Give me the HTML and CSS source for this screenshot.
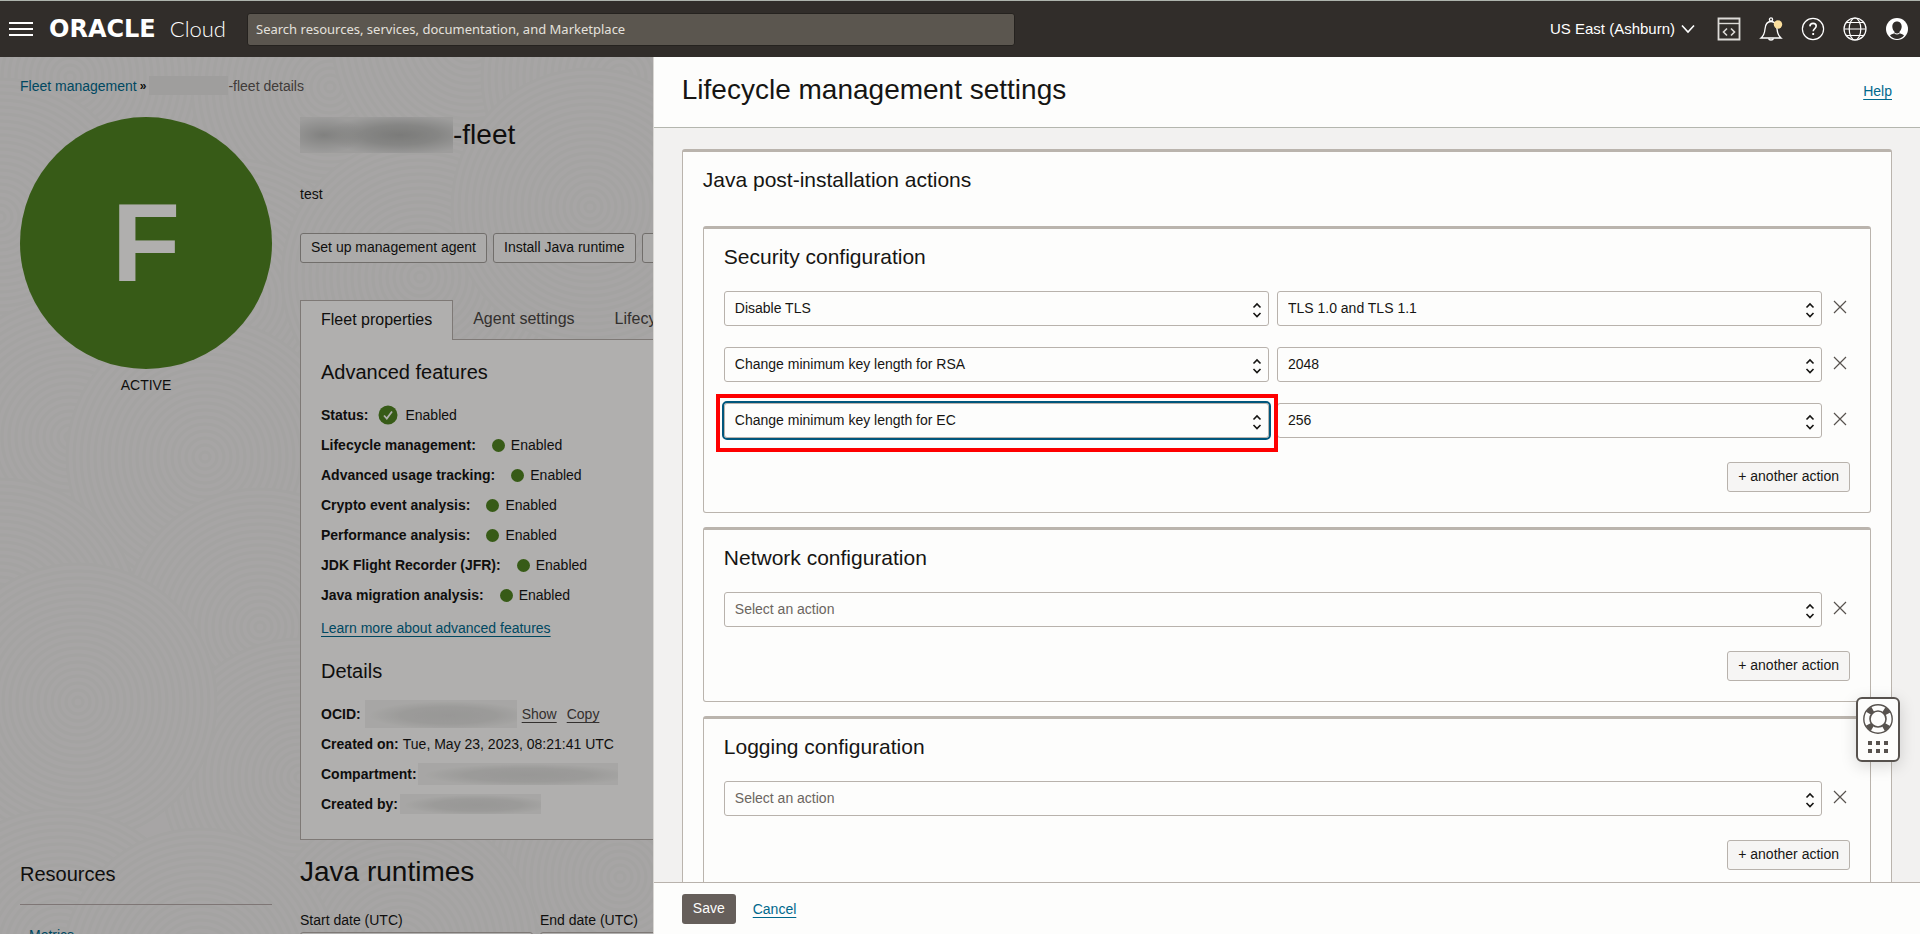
FILE: index.html
```html
<!DOCTYPE html>
<html lang="en">
<head>
<meta charset="utf-8">
<title>Fleet details - Lifecycle management settings</title>
<link rel="stylesheet" href="styles.css">
</head>
<body>
<svg class="defs" aria-hidden="true">
  <defs>
    <symbol id="i-updown" viewBox="0 0 10 16"><path d="M1.5 5.5 5 2l3.500 3.500M1.500 11 5 14.500 8.500 11" fill="none" stroke="currentColor" stroke-width="1.600"/></symbol>
    <symbol id="i-x" viewBox="0 0 14 14"><path d="M1 1 13 13M13 1 1 13" fill="none" stroke="currentColor" stroke-width="1.200"/></symbol>
  </defs>
</svg>

<header class="topbar">
  <button class="icon-btn" aria-label="Navigation menu">
    <svg width="24" height="16" viewBox="0 0 24 16"><path d="M0 2h24M0 8h24M0 14h24" stroke="#fff" stroke-width="2"/></svg>
  </button>
  <a class="logo" href="#"><span class="logo-name">ORACLE</span><span class="logo-cloud">Cloud</span></a>
  <input class="search" type="text" aria-label="Search" placeholder="Search resources, services, documentation, and Marketplace">
  <div class="tools">
    <button class="region">US East (Ashburn)
      <svg width="14" height="10" viewBox="0 0 14 10"><path d="M1 1.500 7 8l6-6.500" fill="none" stroke="#fff" stroke-width="1.600"/></svg>
    </button>
    <button class="icon-btn" aria-label="Developer tools">
      <svg width="24" height="24" viewBox="0 0 24 24" fill="none" stroke="#dddbd8"><path d="M1.500 1.500h21v21h-21z" stroke-width="1.800"/><path d="M1.500 6.500h21" stroke-width="1.400"/><path d="M10 11.500 6.500 15l3.500 3.500M14 11.500l3.500 3.500-3.500 3.500" stroke-width="1.600"/></svg>
    </button>
    <button class="icon-btn" aria-label="Announcements">
      <svg width="24" height="24" viewBox="0 0 24 24" fill="none" stroke="#fff" stroke-width="1.300"><path d="M2 21c2.500-2 3.500-4 4-9 .4-5 2-7.500 6-7.500s5.600 2.500 6 7.500c.5 5 1.500 7 4 9z"/><circle cx="12" cy="2.500" r="1.600"/><path d="M9.500 21.500c.6 2 4.400 2 5 0"/><circle cx="19" cy="7.500" r="4.200" fill="#fbdf9d" stroke="none"/></svg>
    </button>
    <button class="icon-btn" aria-label="Help menu">
      <svg width="24" height="24" viewBox="0 0 24 24" fill="none" stroke="#fff"><circle cx="12" cy="12" r="10.600" stroke-width="1.200"/><path d="M8.900 9.400c.1-2 1.400-3 3.200-3s3.100 1 3.100 2.700c0 2.400-3 2.600-3 5.200" stroke-width="1.600"/><path d="M12.200 16v2" stroke-width="1.800"/></svg>
    </button>
    <button class="icon-btn" aria-label="Language">
      <svg width="24" height="24" viewBox="0 0 24 24" fill="none" stroke="#fff" stroke-width="1.200"><circle cx="12" cy="12" r="11"/><ellipse cx="12" cy="12" rx="5.800" ry="11"/><path d="M1 12h22M3.500 5.500h17M3.500 18.500h17"/></svg>
    </button>
    <button class="icon-btn" aria-label="Profile">
      <svg width="24" height="24" viewBox="0 0 24 24"><circle cx="12" cy="12" r="11" fill="#fff"/><path d="M12 4.500c-3 0-4.700 2.200-4.700 5 0 2.200 1 4.200 2.200 5.200v1.600c-2 .5-3.700 1.200-4.500 2.200C6.800 20.700 9.300 22 12 22s5.200-1.300 7-3.500c-.8-1-2.500-1.700-4.500-2.200v-1.600c1.200-1 2.200-3 2.200-5.200 0-2.800-1.700-5-4.700-5z" fill="#312d2a"/><path d="M9.500 15.500c1.500 1.200 3.500 1.200 5 0v1.200c-1.500 1-3.500 1-5 0z" fill="#fff"/></svg>
    </button>
  </div>
</header>

<div class="workspace">
  <main class="page">
    <svg class="texture" aria-hidden="true">
      <defs>
        <pattern id="ring" width="1" height="1" viewBox="0 0 280 280">
          <g fill="#efedec" stroke="#ebeae8" stroke-width="3">
            <circle cx="140" cy="140" r="138"/><circle cx="140" cy="140" r="131"/><circle cx="140" cy="140" r="124"/><circle cx="140" cy="140" r="117"/><circle cx="140" cy="140" r="110"/><circle cx="140" cy="140" r="103"/><circle cx="140" cy="140" r="96"/><circle cx="140" cy="140" r="89"/><circle cx="140" cy="140" r="82"/><circle cx="140" cy="140" r="75"/><circle cx="140" cy="140" r="68"/><circle cx="140" cy="140" r="61"/><circle cx="140" cy="140" r="54"/><circle cx="140" cy="140" r="47"/><circle cx="140" cy="140" r="40"/><circle cx="140" cy="140" r="33"/><circle cx="140" cy="140" r="26"/><circle cx="140" cy="140" r="19"/><circle cx="140" cy="140" r="12"/><circle cx="140" cy="140" r="5"/>
          </g>
        </pattern>
      </defs>
      <g fill="url(#ring)">
        <circle cx="70" cy="20" r="140"/><circle cx="330" cy="30" r="140"/><circle cx="470" cy="-20" r="140"/><circle cx="620" cy="20" r="140"/>
        <circle cx="0" cy="160" r="140"/><circle cx="230" cy="240" r="140"/><circle cx="420" cy="220" r="140"/><circle cx="590" cy="150" r="140"/>
        <circle cx="70" cy="380" r="140"/><circle cx="205" cy="400" r="140"/><circle cx="0" cy="560" r="140"/><circle cx="260" cy="570" r="140"/>
        <circle cx="300" cy="720" r="140"/><circle cx="78" cy="645" r="140"/><circle cx="520" cy="900" r="140"/><circle cx="620" cy="820" r="140"/><circle cx="400" cy="890" r="140"/><circle cx="60" cy="890" r="140"/><circle cx="200" cy="910" r="140"/>
      </g>
    </svg>

    <nav class="breadcrumb" aria-label="Breadcrumb">
      <a href="#">Fleet management</a><b class="sep">»</b><span class="redact redact-crumb"></span><span class="crumb-now">-fleet details</span>
    </nav>

    <div class="page-grid">
      <aside class="identity">
        <div class="avatar">F</div>
        <div class="state">ACTIVE</div>
      </aside>

      <section class="detail">
        <h1 class="fleet-title"><span class="redact redact-title"></span>-fleet</h1>
        <p class="fleet-desc">test</p>
        <div class="actions">
          <button class="btn">Set up management agent</button>
          <button class="btn">Install Java runtime</button>
          <button class="btn" aria-label="More actions"><span class="more"></span></button>
        </div>
        <div class="tabs" role="tablist">
          <button class="tab tab-active" role="tab">Fleet properties</button>
          <button class="tab" role="tab">Agent settings</button>
          <button class="tab" role="tab">Lifecycle management settings</button>
        </div>
        <div class="panel">
          <h2 class="heading">Advanced features</h2>
          <ul class="facts">
            <li><b>Status:</b><svg class="check" width="20" height="20" viewBox="0 0 20 20"><circle cx="10" cy="10" r="9.500" fill="#508321"/><path d="m6 10.500 2.800 3L14 6.500" fill="none" stroke="#fcfbfa" stroke-width="1.800"/></svg>Enabled</li>
            <li><b>Lifecycle management:</b><i class="dot"></i>Enabled</li>
            <li><b>Advanced usage tracking:</b><i class="dot"></i>Enabled</li>
            <li><b>Crypto event analysis:</b><i class="dot"></i>Enabled</li>
            <li><b>Performance analysis:</b><i class="dot"></i>Enabled</li>
            <li><b>JDK Flight Recorder (JFR):</b><i class="dot"></i>Enabled</li>
            <li><b>Java migration analysis:</b><i class="dot"></i>Enabled</li>
          </ul>
          <a class="learn" href="#">Learn more about advanced features</a>
          <h2 class="heading">Details</h2>
          <ul class="facts">
            <li><b>OCID:</b><span class="redact redact-ocid"></span><a class="quiet" href="#">Show</a><a class="quiet" href="#">Copy</a></li>
            <li><b>Created on:</b><span class="value">Tue, May 23, 2023, 08:21:41 UTC</span></li>
            <li><b>Compartment:</b><span class="redact redact-comp"></span></li>
            <li><b>Created by:</b><span class="redact redact-by"></span></li>
          </ul>
        </div>
      </section>

      <nav class="resources" aria-label="Resources">
        <h2 class="heading">Resources</h2>
        <ul class="res-list"><li><a href="#">Metrics</a></li></ul>
      </nav>

      <section class="runtimes">
        <h1 class="runtimes-title">Java runtimes</h1>
        <div class="dates">
          <label class="date">Start date (UTC)<input type="text"></label>
          <label class="date">End date (UTC)<input type="text"></label>
        </div>
      </section>
    </div>
    <div class="dimmer"></div>
  </main>

  <section class="drawer" aria-labelledby="drawer-title">
    <div class="drawer-head">
      <h1 class="drawer-title" id="drawer-title">Lifecycle management settings</h1>
      <a class="link" href="#">Help</a>
    </div>

    <div class="drawer-body">
      <div class="card">
        <h2 class="heading">Java post-installation actions</h2>
        <div class="groups">
          <div class="card group">
            <h3 class="heading">Security configuration</h3>
            <div class="rows">
              <div class="row">
                <div class="pick"><select aria-label="Security action 1"><option>Disable TLS</option></select><svg><use href="#i-updown"/></svg></div>
                <div class="pick"><select aria-label="Value 1"><option>TLS 1.0 and TLS 1.1</option></select><svg><use href="#i-updown"/></svg></div>
                <button class="remove" aria-label="Remove"><svg><use href="#i-x"/></svg></button>
              </div>
              <div class="row">
                <div class="pick"><select aria-label="Security action 2"><option>Change minimum key length for RSA</option></select><svg><use href="#i-updown"/></svg></div>
                <div class="pick"><select aria-label="Value 2"><option>2048</option></select><svg><use href="#i-updown"/></svg></div>
                <button class="remove" aria-label="Remove"><svg><use href="#i-x"/></svg></button>
              </div>
              <div class="row">
                <div class="pick pick-current"><select aria-label="Security action 3"><option>Change minimum key length for EC</option></select><svg><use href="#i-updown"/></svg></div>
                <div class="pick"><select aria-label="Value 3"><option>256</option></select><svg><use href="#i-updown"/></svg></div>
                <button class="remove" aria-label="Remove"><svg><use href="#i-x"/></svg></button>
              </div>
            </div>
            <button class="btn add">+ another action</button>
          </div>

          <div class="card group">
            <h3 class="heading">Network configuration</h3>
            <div class="rows">
              <div class="row">
                <div class="pick pick-empty"><select aria-label="Network action"><option>Select an action</option></select><svg><use href="#i-updown"/></svg></div>
                <button class="remove" aria-label="Remove"><svg><use href="#i-x"/></svg></button>
              </div>
            </div>
            <button class="btn add">+ another action</button>
          </div>

          <div class="card group">
            <h3 class="heading">Logging configuration</h3>
            <div class="rows">
              <div class="row">
                <div class="pick pick-empty"><select aria-label="Logging action"><option>Select an action</option></select><svg><use href="#i-updown"/></svg></div>
                <button class="remove" aria-label="Remove"><svg><use href="#i-x"/></svg></button>
              </div>
            </div>
            <button class="btn add">+ another action</button>
          </div>
        </div>
      </div>
    </div>

    <div class="drawer-foot">
      <button class="save">Save</button>
      <a class="link" href="#">Cancel</a>
    </div>
  </section>
</div>

<button class="support" aria-label="Support">
  <svg width="30" height="30" viewBox="0 0 30 30" fill="none" stroke="#57524e"><circle cx="15" cy="15" r="11" stroke-width="6" stroke-dasharray="5.600 11.680" stroke-dashoffset="-5.840"/><circle cx="15" cy="15" r="14.200" stroke-width="1.400"/><circle cx="15" cy="15" r="8" stroke-width="1.600"/></svg>
  <svg width="20" height="12" viewBox="0 0 20 12" fill="#57524e"><path d="M0 0h4v4H0zM8 0h4v4H8zM16 0h4v4h-4zM0 8h4v4H0zM8 8h4v4H8zM16 8h4v4h-4z"/></svg>
</button>
</body>
</html>
```
FILE: styles.css
```css
* { box-sizing: border-box; }

body {
  margin: 0;
  height: 100vh;
  display: flex;
  flex-direction: column;
  overflow: hidden;
  font: 14px/20px "Liberation Sans", Arial, sans-serif;
  color: #161513;
}

h1, h2, h3, p, ul { margin: 0; padding: 0; font-weight: 400; }
ul { list-style: none; }
button, input, select { font: inherit; color: inherit; }
svg { display: block; flex: none; }
a { color: #00688c; text-decoration: none; }

.defs { position: absolute; width: 0; height: 0; }

/* Top bar */
.topbar {
  display: flex;
  align-items: center;
  flex: none;
  height: 57px;
  padding: 0 11px 0 9px;
  border-top: 1px solid #aeb4ad;
  background: #312d2a;
  color: #fff;
}
.icon-btn { padding: 0; border: 0; background: none; }
.logo {
  display: flex;
  flex: none;
  align-items: center;
  gap: 14px;
  width: 196px;
  margin-left: 16px;
  color: #fff;
}
.logo-name { font: bold 24px/28px "DejaVu Sans", sans-serif; }
.logo-cloud { font: 300 22px/28px Lato, sans-serif; }
.search {
  width: 40vw;
  flex: none;
  height: 33px;
  margin-left: 2px;
  padding: 0 8px;
  border: 1px solid #25221f;
  border-radius: 3px;
  background: #5b564f;
  font: 13px/20px "Noto Sans", sans-serif;
}
.search::placeholder { color: #e4e1dd; opacity: 1; }
.tools { display: flex; align-items: center; gap: 18px; margin-left: auto; }
.region {
  display: flex;
  align-items: center;
  gap: 6px;
  padding: 0 4px 0 0;
  border: 0;
  background: none;
  font-size: 15px;
}

/* Page behind the drawer */
.workspace { display: flex; flex: 1; min-height: 0; }
.page {
  position: relative;
  width: 34%;
  padding: 19px 0 0 20px;
  overflow: hidden;
  background: #efedec;
}
.texture { position: absolute; top: 0; left: 0; width: 100%; height: 100%; }
.dimmer { position: absolute; top: 0; left: 0; width: 100%; height: 100%; background: rgba(0, 0, 0, .3); }
.breadcrumb { position: relative; display: flex; white-space: nowrap; }
.sep { margin: 0 3px; font-size: 12px; }
.crumb-now { color: #5d5653; }
.page-grid {
  position: relative;
  z-index: 0;
  display: grid;
  grid-template-columns: 252px minmax(0, 1fr);
  column-gap: 28px;
  row-gap: 14px;
  margin-top: 21px;
  white-space: nowrap;
}
.avatar {
  display: flex;
  align-items: center;
  justify-content: center;
  aspect-ratio: 1;
  border-radius: 50%;
  background: #508321;
  color: #fcfbfa;
  font: bold 112px/120px "Liberation Sans", Arial, sans-serif;
}
.state { margin-top: 6px; text-align: center; }
.fleet-title { display: flex; font-size: 28px; line-height: 36px; }
.fleet-desc { margin-top: 31px; }
.actions { display: flex; gap: 6px; margin-top: 29px; }
.btn {
  flex: none;
  height: 30px;
  padding: 0 10px 2px;
  border: 1px solid #b8b2ac;
  border-radius: 3px;
  background: #f6f5f4;
}
.page .btn { border-color: #a39e9a; }
.more { display: block; width: 60px; }
.tabs { display: flex; margin-top: 37px; }
.tab {
  flex: none;
  height: 39px;
  padding: 0 20px 2px;
  border: 0;
  background: none;
  font-size: 16px;
  color: #4a4542;
}
.tab-active {
  height: 40px;
  margin-bottom: -1px;
  border: 1px solid #b5aeaa;
  border-bottom: 0;
  background: #fcfbfa;
  color: #161513;
  z-index: 1;
}
.panel {
  margin-right: -2px;
  padding: 20px;
  border: 1px solid #b5aeaa;
  background: #fcfbfa;
}
.heading { font-size: 20px; line-height: 24px; }
.facts { margin-top: 16px; }
.facts li { display: flex; align-items: center; height: 30px; }
.check { margin: 0 7px 0 10px; }
.dot { width: 13px; height: 13px; margin: 0 6px 0 16px; border-radius: 50%; background: #508321; }
.value { margin-left: 4px; }
.learn { display: table; margin: 8px 0 21px; line-height: 20px; text-decoration: underline; text-underline-offset: 3px; }
.quiet { margin-left: 5px; color: #4a4542; text-decoration: underline; text-underline-offset: 3px; }
.quiet + .quiet { margin-left: 10px; }

/* Blurred-out values */
.redact { flex: none; background: radial-gradient(ellipse 52% 50% at 55% 55%, #dad9d7, #dfdedc 60%, transparent), #efeeec; }
.redact-crumb { width: 79px; height: 19px; background: #e4e3e1; }
.redact-title { width: 153px; height: 36px; background: radial-gradient(ellipse 40px 18px at 24px 50%, #b8b8b6, transparent), radial-gradient(ellipse 76px 20px at 100px 50%, #b0b0ae, #c0c0be 50%, transparent), #e2e1e0; }
.redact-ocid { width: 152px; height: 28px; margin-left: 4px; }
.redact-comp { width: 200px; height: 22px; margin-left: 1px; }
.redact-by { width: 141px; height: 20px; margin-left: 2px; }

.resources { padding-top: 8px; }
.resources .heading { padding-bottom: 18px; border-bottom: 1px solid #b5a9a8; }
.res-list { padding: 20px 0 0 9px; }
.runtimes-title { font-size: 28px; line-height: 36px; }
.dates { display: flex; gap: 7px; margin-top: 20px; }
.date { display: block; width: 233px; flex: none; }
.date input { display: block; width: 100%; height: 35px; margin-top: 2px; border: 1px solid #b5aeaa; border-radius: 3px; background: #fcfbfa; }

/* Drawer */
.drawer {
  display: flex;
  flex: 1;
  flex-direction: column;
  min-width: 0;
  border-left: 1px solid #d8d6d3;
  background: #f2f1f0;
}
.drawer-head {
  display: flex;
  align-items: center;
  justify-content: space-between;
  padding: 15px 28px 19px;
  border-bottom: 1px solid #b4b6ae;
  background: #fdfdfc;
}
.drawer-title { font-size: 28px; line-height: 36px; }
.drawer .heading { font-size: 21px; }
.link { text-decoration: underline; text-underline-offset: 3px; }
.drawer-head .link { padding-top: 2px; }
.drawer-body { flex: 1; min-height: 0; padding: 21px 28px; overflow: hidden; }
.card {
  padding: 16px 20px 20px;
  border: 1px solid #bab4ad;
  border-top-width: 3px;
  border-radius: 3px;
  background: #fdfdfc;
}
.groups { display: grid; gap: 14px; margin-top: 34px; }
.rows { display: grid; gap: 21px; margin: 22px 0 24px; }
.row { display: flex; gap: 8px; }
.pick { position: relative; flex: 1; min-width: 0; }
.pick select {
  display: block;
  width: 100%;
  height: 35px;
  padding: 0 32px 2px 10px;
  border: 1px solid #b8b2ac;
  border-radius: 3px;
  background: #fdfdfc;
  appearance: none;
}
.pick svg { position: absolute; top: 11px; right: 7px; width: 10px; height: 16px; pointer-events: none; }
.pick-empty select { color: #6b6560; }
.pick-current select { outline: 2px solid #00567c; }
.pick-current::after {
  content: "";
  position: absolute;
  inset: -9px -9px -14px -8px;
  border: 4px solid #fe0000;
  pointer-events: none;
}
.pick-current { z-index: 1; }
.remove { width: 20px; padding: 0 0 3px 3px; border: 0; background: none; color: #57524e; }
.remove svg { width: 14px; height: 14px; }
.add { display: block; margin-left: auto; }
.drawer-foot {
  display: flex;
  align-items: center;
  gap: 17px;
  padding: 11px 28px 10px;
  border-top: 1px solid #b8b2ac;
  background: #fdfdfc;
}
.save { height: 30px; padding: 0 11px 2px; border: 0; border-radius: 3px; background: #665f5b; color: #fdfdfc; }

/* Floating support widget */
.support {
  position: fixed;
  right: 20px;
  bottom: 172px;
  display: flex;
  flex-direction: column;
  align-items: center;
  gap: 7px;
  width: 44px;
  height: 65px;
  padding: 5px 0 0;
  border: 2px solid #57524e;
  border-radius: 6px;
  background: #fdfdfc;
  box-shadow: 0 4px 16px rgba(0, 0, 0, .15);
}
```
